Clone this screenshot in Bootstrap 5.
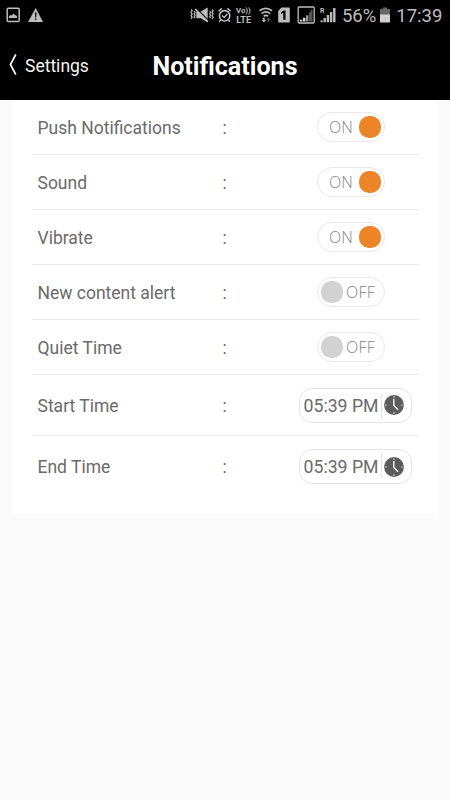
<!DOCTYPE html>
<html lang="en">
<head>
<meta charset="utf-8">
<meta name="viewport" content="width=device-width, initial-scale=1">
<title>Notifications</title>
<link href="https://cdn.jsdelivr.net/npm/bootstrap@5.3.0/dist/css/bootstrap.min.css" rel="stylesheet">
<style>
body { font-family: Roboto, "Liberation Sans", sans-serif; background: #fafafa; color: #6a6a6a; }
.screen { width: 450px; height: 800px; overflow: hidden; }
.top-area { height: 100px; background: #000; }
.status { height: 32px; padding: 0 7.6px 0 6px; color: #bdbdbd; font-size: 18.5px; line-height: 32px; }
.status svg { height: 30px; flex: none; display: block; fill: #bdbdbd; }
.status span { white-space: nowrap; }
.title-bar { height: 68px; display: grid; grid-template-columns: 1fr auto 1fr; }
.back { padding-left: 8px; font-size: 17.5px; line-height: 26px; margin-top: 21px; color: #f4f4f4; }
.page-title { font-size: 25.1px; font-weight: 700; line-height: 30px; margin: 20px 0 0; color: #fff; }
.panel { margin: 0 12px; height: 414px; padding: 0 19px 0 20px; border-radius: 0 0 2px 2px; }
.setting { height: 55px; border-bottom: 1px solid #e9e9e9; font-size: 17.5px; padding-left: 5.5px; }
.setting.tall { height: 61px; }
.setting.last { border-bottom: 0; }
.setting .label, .setting .colon { padding-top: 2px; }
.setting .label { width: 185px; }
.control { width: 126px; }
.toggle { width: 68px; height: 30px; border: 1px solid #e8e8e8; border-radius: 15px; font-family: "Open Sans", sans-serif; font-weight: 300; font-size: 16px; line-height: 28px; color: #858585; padding: 0 3px; }
.toggle .off-text { padding-left: 3px; letter-spacing: .3px; }
.knob { width: 22px; height: 22px; border-radius: 10px; background: #d2d2d2; }
.toggle.is-on .knob { background: #eb8528; }
.time { width: 113.5px; height: 35px; margin-left: 5.5px; border: 1px solid #e3e3e3; border-radius: 13px; font-size: 17.7px; padding: 0 6.5px 0 4px; }
.time span { padding-top: 2px; }
.time .sep { width: 1px; height: 25px; background: #e3e3e3; }
</style>
</head>
<body>
<main class="screen">
  <header class="top-area">
    <div class="status d-flex">
      <svg width="14" viewBox="6 0 14 30"><rect x="7.2" y="8.2" width="12" height="13.4" rx="1" fill="none" stroke="#bdbdbd" stroke-width="1.5"/><path d="M9 18v-2l2-1 1 .5 1.5-2 1.5 1.5 2 1v2z"/></svg>
      <svg class="ms-2" width="16" viewBox="28 0 16 30"><path d="M35.7 8 43 22H28z"/><path d="M34.9 12.5h1.6l-.3 5h-1zM35 18.6h1.4V20H35z" fill="#000"/></svg>
      <svg class="ms-auto" width="146" viewBox="190 0 146 30">
        <g fill="none" stroke="#bdbdbd" stroke-width="1.2">
          <path d="M191 9.5l1.2 1.4-1.2 1.6 1.2 1.6-1.2 1.6 1.2 1.6-1.2 1.7M194.2 11l.9 1.3-.9 1.5.9 1.5-.9 1.5.9 1.5M209.7 11l.9 1.3-.9 1.5.9 1.5-.9 1.5.9 1.5M212 9.5l1.2 1.4-1.2 1.6 1.2 1.6-1.2 1.6 1.2 1.6-1.2 1.7"/>
          <circle cx="224.6" cy="15.8" r="5.2" stroke-width="1.6"/>
          <path d="M222 15.4l2.2 2 3.2-3.4M218.6 11.2l3.2-2.8M230.6 11.2l-3.2-2.8M220.8 20l-1.6 1.8M228.4 20l1.6 1.8" stroke-width="1.4"/>
          <path d="M259.6 10.8q6-4.8 12.4 0M261.6 13.6q4.2-3.4 8.6 0M263.8 16.2q2.1-1.7 4.2 0" stroke-width="1.8"/>
        </g>
        <path d="M196.3 11.6h4.4l7-4.2v15.2l-7-4.4h-4.4z"/>
        <path d="M196.2 8.2l12.2 12.2" stroke="#000" stroke-width="1.3"/>
        <path d="M195.2 9l12.5 12.5" stroke="#bdbdbd" stroke-width="1.5"/>
        <text x="236" y="13" font-size="7.4" font-weight="700" textLength="14.8" lengthAdjust="spacingAndGlyphs">Vo))</text>
        <text x="236.3" y="23" font-size="8.6" font-weight="700" textLength="14.8" lengthAdjust="spacingAndGlyphs">LTE</text>
        <path d="M263.9 22.5l-2.2-2.6h1.4v-2.2h1.6v2.2h1.4z"/><path d="M268.4 17.4l2.2 2.6h-1.4v2.3h-1.6V20h-1.4z" fill="#555"/>
        <path d="M281.5 7.5h7.3q1 0 1 1v13q0 1-1 1h-9.6q-1 0-1-1V11z"/>
        <path d="M281.2 12.2l2.4-1.7h1.9v9.2h-2.2v-7l-2.1 1.2z" fill="#000"/>
        <rect x="298.2" y="7" width="16" height="16" rx="1" fill="none" stroke="#bdbdbd" stroke-width="1.3"/>
        <path d="M299.9 19.8h2.4v1.7h-2.4zM303 17.8h2.4v3.7H303z" fill="#ddd"/><path d="M306 15.3h2.4v6.2H306z" fill="#999"/><path d="M309 12.3h1.7v9.2H309zM310.7 9.8h1.8v11.7h-1.8z" fill="#555"/>
        <text x="320" y="13.2" font-size="7" font-weight="700">R</text>
        <path d="M320.6 20.3h2v2h-2zM323.5 18h2.4v4.3h-2.4zM326.7 15h2.4v7.3h-2.4zM329.9 12h2.4v10.3h-2.4zM333.1 8h2.4v14.3h-2.4z"/>
      </svg>
      <span style="margin-left:5.8px">56%</span>
      <svg class="ms-1" width="10" viewBox="380 0 10 30"><path d="M383 7.5h4V9h3v6h-10V9h3z" fill="#666"/><path d="M380 14.5h10v8h-10z" fill="#d0d0d0"/></svg>
      <span style="margin-left:6px">17:39</span>
    </div>
    <div class="title-bar">
      <div class="back d-flex"><svg width="11" height="24" viewBox="0 0 11 24"><path d="M7.8 1.5 2.4 11.5l5.4 10" fill="none" stroke="#fff" stroke-width="1.7"/></svg><span style="margin-left:6px">Settings</span></div>
      <h1 class="page-title">Notifications</h1>
    </div>
  </header>
  <section class="panel bg-white">
    <div class="setting d-flex align-items-center"><span class="label">Push Notifications</span><span class="colon">:</span><div class="control ms-auto d-flex"><div class="toggle is-on d-flex align-items-center justify-content-between ms-4"><span class="ps-2">ON</span><i class="knob"></i></div></div></div>
    <div class="setting d-flex align-items-center"><span class="label">Sound</span><span class="colon">:</span><div class="control ms-auto d-flex"><div class="toggle is-on d-flex align-items-center justify-content-between ms-4"><span class="ps-2">ON</span><i class="knob"></i></div></div></div>
    <div class="setting d-flex align-items-center"><span class="label">Vibrate</span><span class="colon">:</span><div class="control ms-auto d-flex"><div class="toggle is-on d-flex align-items-center justify-content-between ms-4"><span class="ps-2">ON</span><i class="knob"></i></div></div></div>
    <div class="setting d-flex align-items-center"><span class="label">New content alert</span><span class="colon">:</span><div class="control ms-auto d-flex"><div class="toggle d-flex align-items-center ms-4"><i class="knob"></i><span class="off-text">OFF</span></div></div></div>
    <div class="setting d-flex align-items-center"><span class="label">Quiet Time</span><span class="colon">:</span><div class="control ms-auto d-flex"><div class="toggle d-flex align-items-center ms-4"><i class="knob"></i><span class="off-text">OFF</span></div></div></div>
    <div class="setting tall d-flex align-items-center"><span class="label">Start Time</span><span class="colon">:</span><div class="control ms-auto d-flex"><div class="time d-flex align-items-center justify-content-between"><span>05:39 PM</span><i class="sep"></i>
      <svg width="20" height="20" viewBox="0 0 20 20"><circle cx="10" cy="10" r="9.9" fill="#5c5c5c"/><path d="M9.8 4v6.4l4.3 4.3" fill="none" stroke="#f4f4f4" stroke-width="1.4"/><path d="M10 1.2v1.6M10 17.2v1.6M1.2 10h1.6M17.2 10h1.6" stroke="#ddd" stroke-width="1.2"/></svg></div></div></div>
    <div class="setting tall last d-flex align-items-center"><span class="label">End Time</span><span class="colon">:</span><div class="control ms-auto d-flex"><div class="time d-flex align-items-center justify-content-between"><span>05:39 PM</span><i class="sep"></i>
      <svg width="20" height="20" viewBox="0 0 20 20"><circle cx="10" cy="10" r="9.9" fill="#5c5c5c"/><path d="M9.8 4v6.4l4.3 4.3" fill="none" stroke="#f4f4f4" stroke-width="1.4"/><path d="M10 1.2v1.6M10 17.2v1.6M1.2 10h1.6M17.2 10h1.6" stroke="#ddd" stroke-width="1.2"/></svg></div></div></div>
  </section>
</main>
<script src="https://cdn.jsdelivr.net/npm/bootstrap@5.3.0/dist/js/bootstrap.bundle.min.js"></script>
</body>
</html>
